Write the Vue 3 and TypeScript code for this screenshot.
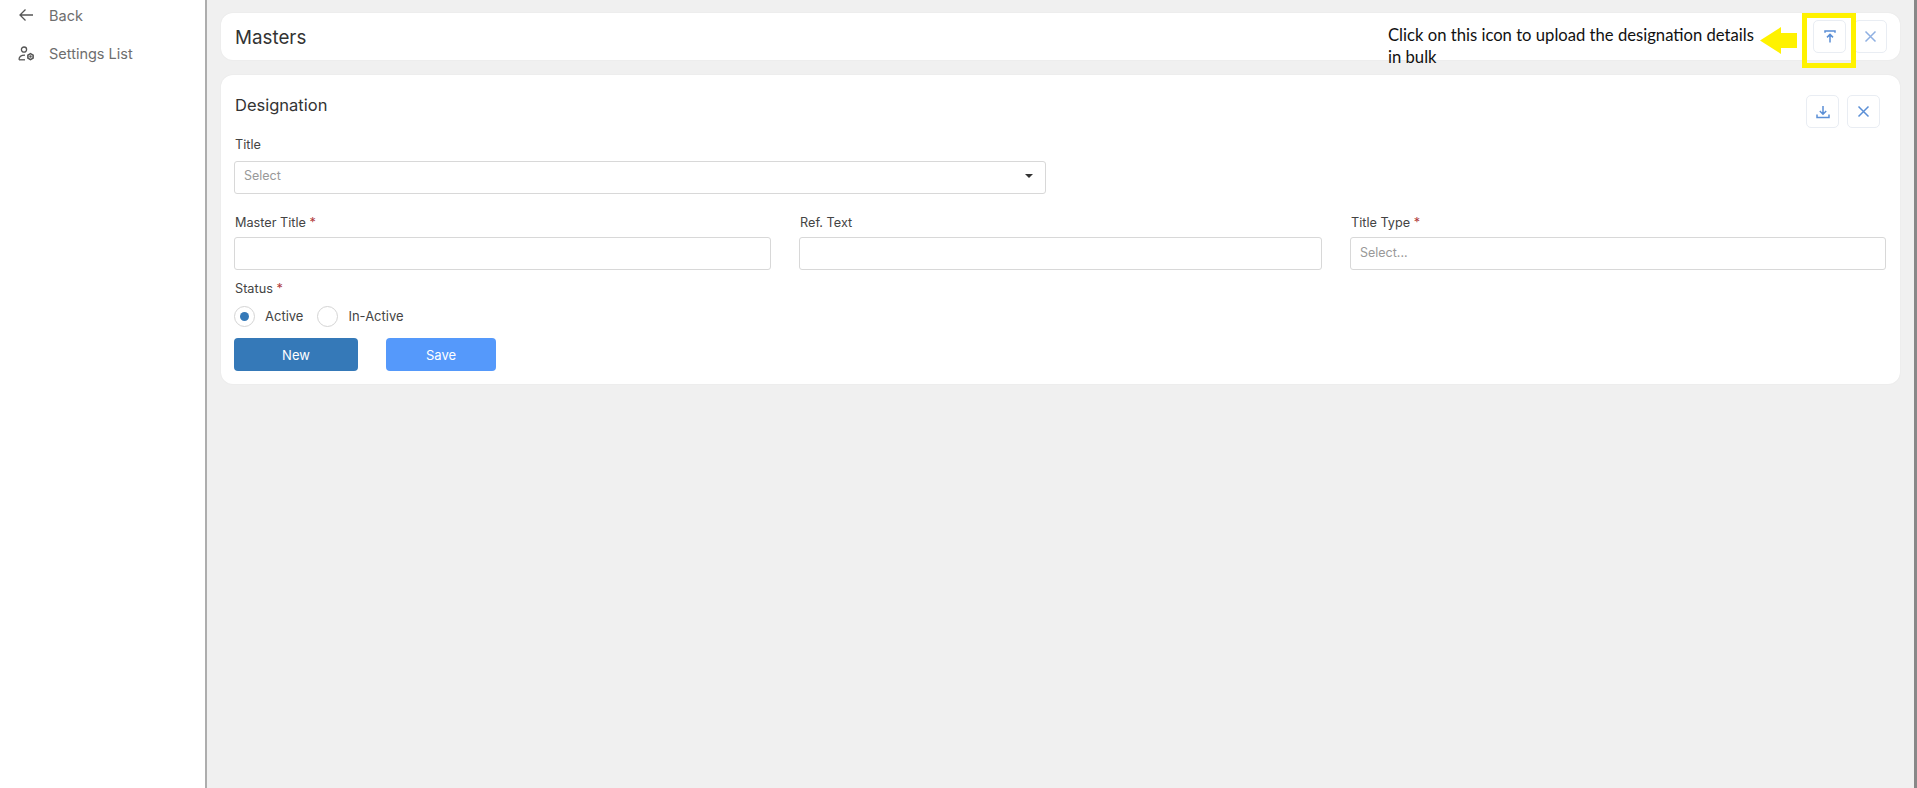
<script setup lang="ts">
const fields = [
  { label: 'Master Title', required: true, placeholder: '' },
  { label: 'Ref. Text', required: false, placeholder: '' },
  { label: 'Title Type', required: true, placeholder: 'Select...' },
]
</script>

<template>
  <div class="page">
    <aside class="sidebar">
      <a class="nav back">
        <svg width="16" height="14" viewBox="0 0 16 14" fill="none" stroke="#555" stroke-width="1.3"><path d="M14.5 7H1.5M7 1.5 1.5 7 7 12.5" /></svg>
        <span>Back</span>
      </a>
      <a class="nav">
        <svg width="17" height="15" viewBox="0 0 17 15" fill="none" stroke="#555" stroke-width="1.3"><circle cx="6" cy="3.6" r="2.6" /><path d="M1 13.8c0-3 2.4-4.6 6-4.6" /><path d="M1 13.8h6" /><path d="M12.5 7.6l2.6 1.5v3l-2.6 1.5-2.6-1.5v-3z" stroke-width="1.6" /><circle cx="12.5" cy="10.6" r=".6" /></svg>
        <span>Settings List</span>
      </a>
    </aside>

    <main class="main">
      <header class="card top">
        <h1>Masters</h1>
        <div class="actions top-actions">
          <button class="icon-btn">
            <svg width="12" height="13" viewBox="0 0 12 13" fill="none" stroke="#5b8fd6" stroke-width="1.5"><path d="M1 2.8V1h10v1.8M6 12.5V4.6M3 7.4 6 4.4l3 3" /></svg>
          </button>
          <button class="icon-btn">
            <svg width="13" height="13" viewBox="0 0 13 13" fill="none" stroke="#8fb0e2" stroke-width="1.5"><path d="M1.5 1.5l10 10M11.5 1.5l-10 10" /></svg>
          </button>
        </div>
        <p class="note">Click on this icon to upload the designation details in bulk</p>
        <svg class="note-arrow" width="37" height="27" viewBox="0 0 37 27"><path d="M0 13.5 21 0v6h16v15H21v6z" fill="#fff200" /></svg>
        <div class="highlight"></div>
      </header>

      <section class="card form">
        <div class="form-head">
          <h2>Designation</h2>
          <div class="actions">
            <button class="icon-btn">
              <svg width="14" height="14" viewBox="0 0 14 14" fill="none" stroke="#5b8fd6" stroke-width="1.5"><path d="M7 1v8M3.8 6 7 9.2 10.2 6M1 9.5v3h12v-3" /></svg>
            </button>
            <button class="icon-btn">
              <svg width="13" height="13" viewBox="0 0 13 13" fill="none" stroke="#5b8fd6" stroke-width="1.5"><path d="M1.5 1.5l10 10M11.5 1.5l-10 10" /></svg>
            </button>
          </div>
        </div>

        <label class="label title-label">Title</label>
        <div class="control select">
          <span class="placeholder">Select</span>
          <span class="caret"></span>
        </div>

        <div class="row">
          <div v-for="f in fields" :key="f.label" class="field">
            <label class="label">{{ f.label }}<em v-if="f.required"> *</em></label>
            <div class="control"><span class="placeholder">{{ f.placeholder }}</span></div>
          </div>
        </div>

        <label class="label status-label">Status<em> *</em></label>
        <div class="radios">
          <span class="radio on"></span><span class="radio-text">Active</span>
          <span class="radio"></span><span class="radio-text">In-Active</span>
        </div>

        <div class="buttons">
          <button class="btn new">New</button>
          <button class="btn save">Save</button>
        </div>
      </section>
    </main>
  </div>
</template>

<style>
html, body { margin: 0; overflow: hidden; background: #fff; }
</style>

<style scoped>
.page {
  display: flex;
  width: 1917px;
  height: 788px;
  font-family: Inter, "Noto Sans", sans-serif;
  color: #444;
  overflow: hidden;
}
.sidebar {
  width: 205px;
  flex: none;
  box-sizing: content-box;
  border-right: 2px solid #adadad;
  background: #fff;
  display: flex;
  flex-direction: column;
  padding-top: 6px;
  gap: 20px;
}
.nav {
  display: flex;
  align-items: center;
  height: 18px;
  padding-left: 18px;
  font-size: 14.5px;
  color: #6e6e6e;
}
.nav svg { width: 17px; flex: none; }
.nav span { margin-left: 14px; }
.main {
  flex: 1;
  background: #f0f0f0;
  padding: 13px 17px 0 14px;
  box-shadow: inset -3px 0 0 #888;
}
.card {
  background: #fff;
  border-radius: 12px;
  box-shadow: 0 0 2px rgba(0, 0, 0, 0.06);
}
.top {
  position: relative;
  height: 47px;
  display: flex;
  align-items: center;
  justify-content: space-between;
  padding: 0 13px 0 14px;
}
h1 {
  margin: 2px 0 0;
  font-size: 18.8px;
  font-weight: 400;
  color: #333;
}
.actions { display: flex; gap: 8px; }
.top-actions { margin-top: -1px; }
.icon-btn {
  width: 33px;
  height: 33px;
  padding: 0;
  display: flex;
  align-items: center;
  justify-content: center;
  background: #fff;
  border: 1px solid #e9edf3;
  border-radius: 5px;
}
.note {
  position: absolute;
  left: 1167px;
  top: 11px;
  width: 372px;
  margin: 0;
  font-family: Lato, sans-serif;
  font-size: 16.65px;
  line-height: 22px;
  color: #111;
}
.note-arrow {
  position: absolute;
  left: 1539px;
  top: 14px;
}
.highlight {
  position: absolute;
  left: 1581px;
  top: 0;
  width: 54px;
  height: 55px;
  box-sizing: border-box;
  border: 5px solid #fff200;
}
.form {
  margin-top: 15px;
  height: 309px;
  box-sizing: border-box;
  padding: 19px 14px 0 13px;
}
.form-head {
  display: flex;
  justify-content: space-between;
  height: 40px;
}
h2 {
  margin: 0 0 0 1px;
  font-size: 16.5px;
  line-height: 22px;
  font-weight: 400;
  color: #333;
}
.form-head .actions { margin-right: 6px; margin-top: 1px; }
.label {
  display: block;
  font-size: 12.7px;
  line-height: 18px;
  color: #444;
  padding-left: 1px;
}
.label em { font-style: normal; color: #b03a3a; }
.title-label { margin-top: 2px; }
.control {
  box-sizing: border-box;
  height: 33px;
  border: 1px solid #d8d8d8;
  border-radius: 3px;
  display: flex;
  align-items: center;
  padding: 0 0 3px 9px;
  margin-top: 5px;
  background: #fff;
}
.select {
  width: 812px;
  position: relative;
  margin-top: 7px;
  padding-bottom: 5px;
}
.placeholder { font-size: 12.5px; color: #999; }
.caret {
  position: absolute;
  right: 12px;
  top: 12px;
  border-left: 4px solid transparent;
  border-right: 4px solid transparent;
  border-top: 4px solid #333;
}
.row {
  display: grid;
  grid-template-columns: 537px 523px 536px;
  column-gap: 28px;
  margin-top: 20px;
}
.status-label { margin-top: 10px; }
.radios {
  display: flex;
  align-items: center;
  margin-top: 8px;
  height: 21px;
}
.radio {
  box-sizing: border-box;
  width: 21px;
  height: 21px;
  border: 1px solid #d4d4d4;
  border-radius: 50%;
  position: relative;
  flex: none;
}
.radio.on::after {
  content: "";
  position: absolute;
  left: 5px;
  top: 5px;
  width: 9px;
  height: 9px;
  border-radius: 50%;
  background: #3579b8;
}
.radio-text {
  font-size: 13px;
  margin: -2px 14px 0 10px;
  color: #444;
}
.buttons {
  display: flex;
  gap: 28px;
  margin-top: 11px;
}
.btn {
  height: 33px;
  border: 0;
  border-radius: 4px;
  color: #fff;
  font-family: inherit;
  font-size: 13px;
  padding: 0;
}
.new { width: 124px; background: #3579b8; }
.save { width: 110px; background: #5599fb; }
</style>
